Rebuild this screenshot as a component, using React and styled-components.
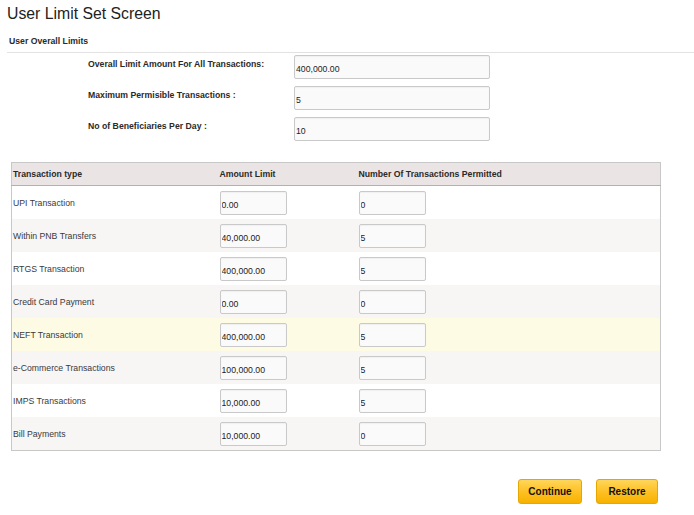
import { Fragment } from 'react';
import styled, { createGlobalStyle } from 'styled-components';

const GlobalStyle = createGlobalStyle`
  body {
    margin: 0;
    background: #fff;
    font-family: 'Liberation Sans', Arial, sans-serif;
    color: #333;
  }
`;

const Page = styled.div`
  width: 694px;
  padding: 4px 0 0 7px;
  box-sizing: border-box;
`;

const Title = styled.h1`
  margin: 0;
  font-size: 15.8px;
  font-weight: normal;
  color: #222;
  line-height: 20px;
`;

const SectionHeading = styled.div`
  margin-top: 10px;
  padding: 0 0 4px 2px;
  line-height: 14px;
  font-size: 8.7px;
  font-weight: bold;
  color: #2a2a2a;
  border-bottom: 1px solid #e2e2e2;
`;

const LimitsForm = styled.div`
  display: grid;
  grid-template-columns: 206px 196px;
  row-gap: 7px;
  margin: 2px 0 0 81px;
`;

const FieldLabel = styled.label`
  font-size: 8.7px;
  font-weight: bold;
  line-height: 10px;
  color: #2a2a2a;
  padding-top: 4px;
`;

const TextField = styled.input`
  display: block;
  box-sizing: border-box;
  width: ${(p) => p.$width}px;
  height: 24px;
  border: 1px solid #c9c9c9;
  border-radius: 2px;
  background: #fafafa;
  font-family: 'Liberation Sans', Arial, sans-serif;
  font-size: 8.7px;
  color: #222;
  padding: 4px 0 0 1px;
  outline: none;
  box-shadow: inset 0 1px 1px rgba(0, 0, 0, 0.04);
`;

const Table = styled.table`
  margin: 21px 0 0 4px;
  width: 650px;
  border-collapse: collapse;
  table-layout: fixed;
  border: 1px solid #c8c8c8;
  font-size: 8.7px;
`;

const HeadCell = styled.th`
  height: 22px;
  padding: 0 1px;
  text-align: left;
  font-weight: bold;
  color: #2a2a2a;
  background: #ebe4e4;
  border-bottom: 1px solid #b4b0b0;
`;

const Row = styled.tr`
  background: ${(p) => (p.$highlight ? '#fdfbe4' : p.$alt ? '#f8f5f5' : '#fff')};
`;

const Cell = styled.td`
  height: 33px;
  padding: 0 1px;
  color: #3a3a3a;
  vertical-align: middle;
`;

const Actions = styled.div`
  display: flex;
  justify-content: flex-end;
  gap: 14px;
  width: 651px;
  margin-top: 28px;
`;

const Button = styled.button`
  height: 25px;
  width: ${(p) => p.$width}px;
  border: 1px solid #e6a700;
  border-radius: 3px;
  background: linear-gradient(#ffd65a, #fdbd1c 60%, #f7b200);
  font-family: 'Liberation Sans', Tahoma, sans-serif;
  font-size: 10px;
  font-weight: bold;
  color: #111;
  cursor: pointer;
  padding: 0;
`;

const overall = [
  ['Overall Limit Amount For All Transactions:', '400,000.00'],
  ['Maximum Permisible Transactions :', '5'],
  ['No of Beneficiaries Per Day :', '10'],
];

const transactions = [
  ['UPI Transaction', '0.00', '0'],
  ['Within PNB Transfers', '40,000.00', '5'],
  ['RTGS Transaction', '400,000.00', '5'],
  ['Credit Card Payment', '0.00', '0'],
  ['NEFT Transaction', '400,000.00', '5'],
  ['e-Commerce Transactions', '100,000.00', '5'],
  ['IMPS Transactions', '10,000.00', '5'],
  ['Bill Payments', '10,000.00', '0'],
];

export default function App() {
  return (
    <>
      <GlobalStyle />
      <Page>
        <Title>User Limit Set Screen</Title>
        <SectionHeading>User Overall Limits</SectionHeading>
        <LimitsForm>
          {overall.map(([label, value]) => (
            <Fragment key={label}>
              <FieldLabel>{label}</FieldLabel>
              <TextField $width={196} defaultValue={value} />
            </Fragment>
          ))}
        </LimitsForm>

        <Table>
          <colgroup>
            <col style={{ width: 207 }} />
            <col style={{ width: 139 }} />
            <col />
          </colgroup>
          <thead>
            <tr>
              <HeadCell>Transaction type</HeadCell>
              <HeadCell>Amount Limit</HeadCell>
              <HeadCell>Number Of Transactions Permitted</HeadCell>
            </tr>
          </thead>
          <tbody>
            {transactions.map(([name, amount, count], i) => (
              <Row key={name} $alt={i % 2 === 1} $highlight={name === 'NEFT Transaction'}>
                <Cell>{name}</Cell>
                <Cell>
                  <TextField $width={67} defaultValue={amount} />
                </Cell>
                <Cell>
                  <TextField $width={67} defaultValue={count} />
                </Cell>
              </Row>
            ))}
          </tbody>
        </Table>

        <Actions>
          <Button $width={64}>Continue</Button>
          <Button $width={62}>Restore</Button>
        </Actions>
      </Page>
    </>
  );
}
